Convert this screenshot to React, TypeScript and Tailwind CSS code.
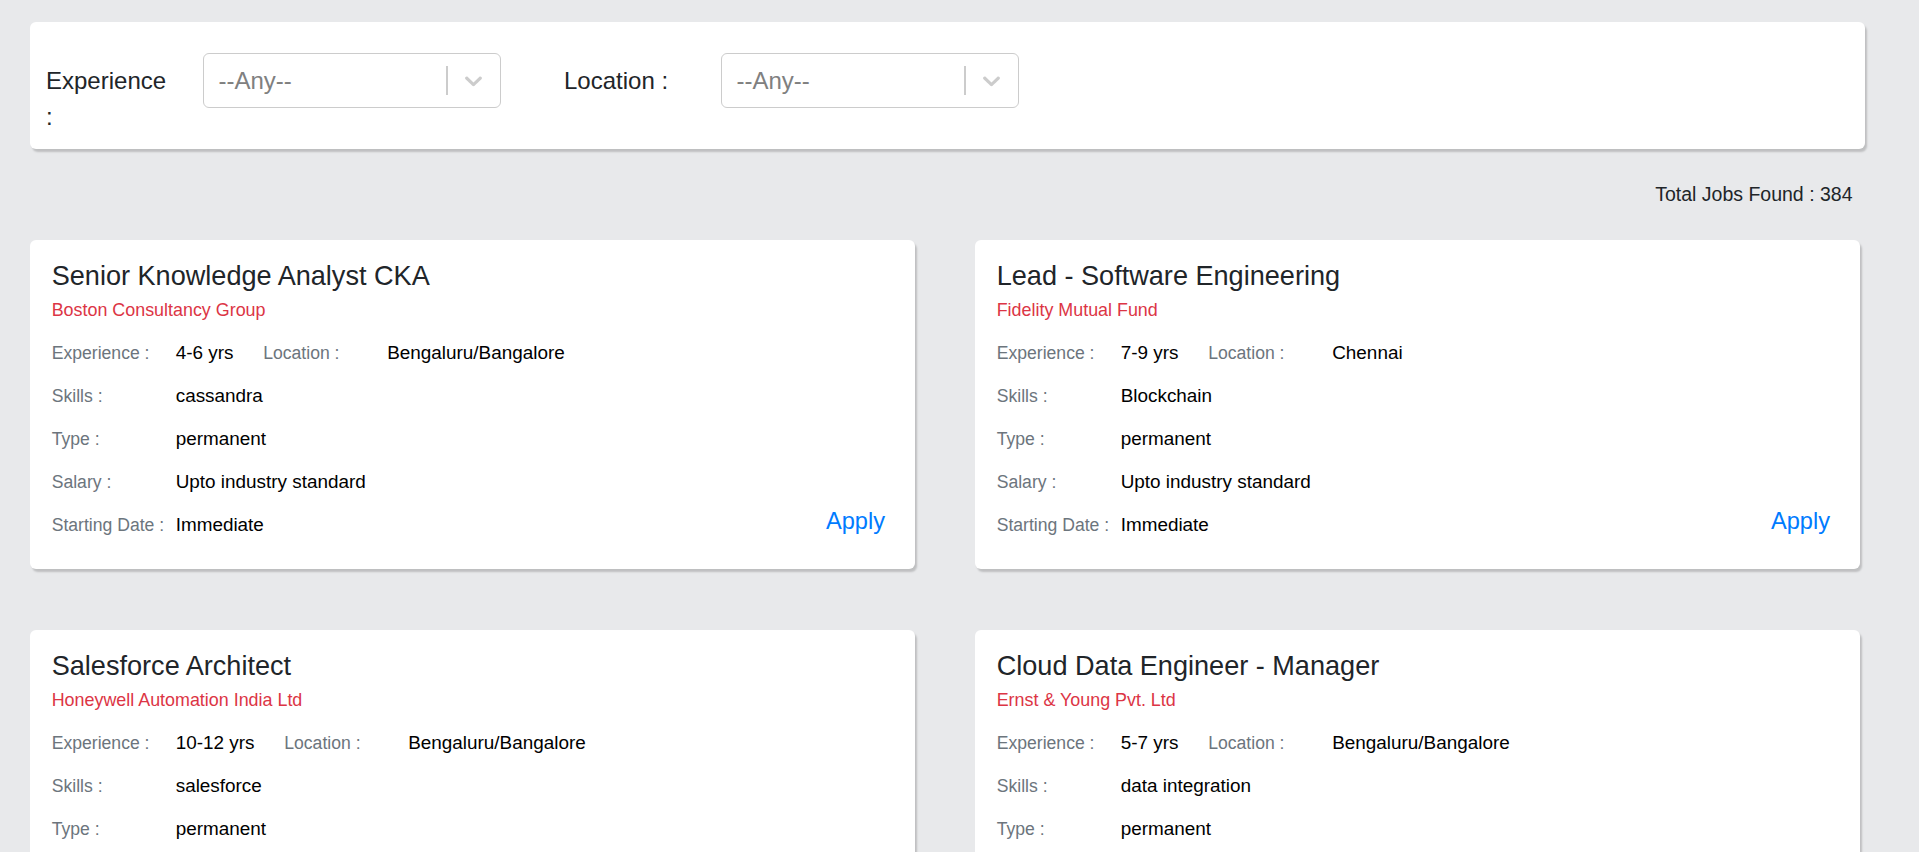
import React from 'react';

interface Job {
  title: string;
  company: string;
  experience: string;
  location: string;
  skills: string;
  type: string;
  salary: string;
  startDate: string;
}

const jobs: Job[] = [
  {
    title: 'Senior Knowledge Analyst CKA',
    company: 'Boston Consultancy Group',
    experience: '4-6 yrs',
    location: 'Bengaluru/Bangalore',
    skills: 'cassandra',
    type: 'permanent',
    salary: 'Upto industry standard',
    startDate: 'Immediate'
  },
  {
    title: 'Lead - Software Engineering',
    company: 'Fidelity Mutual Fund',
    experience: '7-9 yrs',
    location: 'Chennai',
    skills: 'Blockchain',
    type: 'permanent',
    salary: 'Upto industry standard',
    startDate: 'Immediate'
  },
  {
    title: 'Salesforce Architect',
    company: 'Honeywell Automation India Ltd',
    experience: '10-12 yrs',
    location: 'Bengaluru/Bangalore',
    skills: 'salesforce',
    type: 'permanent',
    salary: 'Upto industry standard',
    startDate: 'Immediate'
  },
  {
    title: 'Cloud Data Engineer - Manager',
    company: 'Ernst & Young Pvt. Ltd',
    experience: '5-7 yrs',
    location: 'Bengaluru/Bangalore',
    skills: 'data integration',
    type: 'permanent',
    salary: 'Upto industry standard',
    startDate: 'Immediate'
  }
];

function Chevron() {
  return (
    <svg viewBox="0 0 20 20" className="w-[29px] h-[29px] fill-[#cccccc]">
      <path d="M4.516 7.548c0.436-0.446 1.043-0.481 1.576 0l3.908 3.747 3.908-3.747c0.533-0.481 1.141-0.446 1.574 0 0.436 0.445 0.408 1.197 0 1.615-0.406 0.418-4.695 4.502-4.695 4.502-0.217 0.223-0.502 0.335-0.787 0.335s-0.57-0.112-0.789-0.335c0 0-4.287-4.084-4.695-4.502s-0.436-1.17 0-1.615z" />
    </svg>
  );
}

function SelectBox() {
  return (
    <div className="ml-[32px] w-[298px] h-[55px] border-[1.45px] border-[#cccccc] rounded-[6px] bg-white flex items-center">
      <div className="flex-1 pl-[14.5px] text-[24px] text-[#808080]">--Any--</div>
      <div className="w-[1.45px] h-[29px] bg-[#cccccc]" />
      <div className="px-[11.6px] flex items-center">
        <Chevron />
      </div>
    </div>
  );
}

function JobCard({ job }: { job: Job }) {
  const label = 'w-[124px] shrink-0 text-[17.6px] text-[#6c757d]';
  const row = 'mt-[16px] h-[27px] flex items-baseline';
  return (
    <div className="h-[329px] bg-white rounded-[6px] shadow-[2px_3px_2px_rgba(0,0,0,0.18)] pl-[21.7px] pr-[30px] pt-[20px] flex flex-col">
      <div className="text-[27.1px] leading-[32px] text-[#212529]">{job.title}</div>
      <div className="mt-[5.4px] text-[17.9px] leading-[26.4px] text-[#dc3545]">{job.company}</div>

      <div className="text-[18.9px] leading-[27px] text-black">
        <div className="mt-[15px] h-[27px] flex items-baseline">
          <span className={label}>Experience :</span>
          <span className="mr-[29.8px]">{job.experience}</span>
          <span className={label}>Location :</span>
          <span>{job.location}</span>
        </div>
        <div className={row}>
          <span className={label}>Skills :</span>
          <span>{job.skills}</span>
        </div>
        <div className={row}>
          <span className={label}>Type :</span>
          <span>{job.type}</span>
        </div>
        <div className={row}>
          <span className={label}>Salary :</span>
          <span>{job.salary}</span>
        </div>
        <div className={row}>
          <span className={label}>Starting Date :</span>
          <span>{job.startDate}</span>
          <a href="#" className="self-start ml-auto -mt-[1px] text-[23.6px] leading-[22px] text-[#007bff]">
            Apply
          </a>
        </div>
      </div>
    </div>
  );
}

export default function App() {
  return (
    <div className="min-h-screen bg-[#e8e9eb] pt-[22px] pl-[30px] pb-[40px] font-['Liberation_Sans',Arial,sans-serif]">
      <div className="w-[1835px]">
        {/* Filters */}
        <div className="h-[127px] bg-white rounded-[6px] shadow-[2px_3px_2px_rgba(0,0,0,0.18)] pl-[16px] pt-[31px] flex items-start">
          <label className="w-[125px] mt-[10px] text-[24px] leading-[36px] text-[#212529]">Experience :</label>
          <SelectBox />
          <label className="ml-[63px] w-[125px] mt-[10px] text-[24px] leading-[36px] text-[#212529]">Location :</label>
          <SelectBox />
        </div>

        <div className="mt-[30.5px] pr-[12.5px] text-right text-[19.5px] leading-[28.5px] text-[#212529]">
          Total Jobs Found : 384
        </div>

        {/* Job list */}
        <div className="mt-[32px] grid grid-cols-[885px_885px] gap-x-[60px] gap-y-[61px]">
          {jobs.map((job) => (
            <JobCard key={job.title} job={job} />
          ))}
        </div>
      </div>
    </div>
  );
}
